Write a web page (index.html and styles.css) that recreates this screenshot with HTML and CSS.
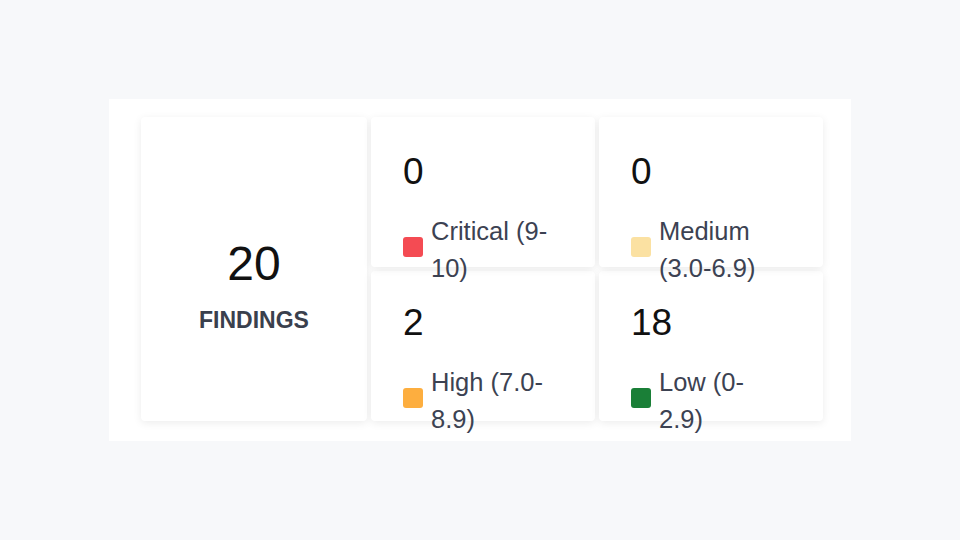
FILE: index.html
```html
<html>
<head>
<meta name="viewport" content="width=device-width, initial-scale=1.0">
<link rel="stylesheet" href="styles.css">
</head>
<body>
  <div class="summary_panel">
    <div class="summary_grid">
      <div class="total_card">
        <div class="total_count">20</div>
        <div class="total_label">FINDINGS</div>
      </div>

      <div class="sev_card top_row">
        <div class="sev_count">0</div>
        <div class="sev_legend">
          <span class="sev_dot critical"></span>
          <span class="sev_name">Critical (9-10)</span>
        </div>
      </div>

      <div class="sev_card top_row">
        <div class="sev_count">0</div>
        <div class="sev_legend">
          <span class="sev_dot medium"></span>
          <span class="sev_name">Medium (3.0-6.9)</span>
        </div>
      </div>

      <div class="sev_card">
        <div class="sev_count">2</div>
        <div class="sev_legend">
          <span class="sev_dot high"></span>
          <span class="sev_name">High (7.0-8.9)</span>
        </div>
      </div>

      <div class="sev_card">
        <div class="sev_count">18</div>
        <div class="sev_legend">
          <span class="sev_dot low"></span>
          <span class="sev_name">Low (0-2.9)</span>
        </div>
      </div>
    </div>
  </div>
</body>
</html>
```

FILE: styles.css
```css
body {
    margin: 0;
    height: 540px;
    display: flex;
    align-items: center;
    justify-content: center;
    background: #f7f8fa;
    font-family: "Liberation Sans", Arial, Helvetica, sans-serif;
}

.summary_panel {
    width: 742px;
    box-sizing: border-box;
    padding: 18px 28px 20px 32px;
    background: #fff;
}

.summary_grid {
    display: grid;
    grid-template-columns: 226px 224px 224px;
    grid-template-rows: 150px 150px;
    gap: 4px;
}

.total_card,
.sev_card {
    background: #fff;
    border-radius: 4px;
    box-shadow: 0 2px 8px rgba(0, 0, 0, 0.08);
}

.total_card {
    grid-row: 1 / span 2;
    display: flex;
    flex-direction: column;
    align-items: center;
    justify-content: center;
    padding-top: 31px;
    box-sizing: border-box;
}

.total_count {
    font-size: 48px;
    line-height: 53px;
    color: #111;
}

.total_label {
    margin-top: 18px;
    font-size: 23px;
    line-height: 25px;
    font-weight: bold;
    color: #3a404d;
}

.sev_card {
    padding: 32px 42px 0 32px;
    box-sizing: border-box;
}

/* labels of the top row spill over the row below */
.sev_card.top_row {
    z-index: 1;
    padding-top: 35px;
}

.sev_count {
    font-size: 37px;
    line-height: 40px;
    color: #111;
}

.sev_legend {
    display: flex;
    align-items: center;
    margin-top: 21px;
}

.sev_dot {
    flex: none;
    width: 20px;
    height: 20px;
    border-radius: 3px;
    margin-right: 8px;
    margin-bottom: 7px;
}

.sev_dot.critical { background: #f44b53; }
.sev_dot.medium { background: #fbe1a2; }
.sev_dot.high { background: #fdae3f; }
.sev_dot.low { background: #1a7f37; }

.sev_name {
    font-size: 25.5px;
    line-height: 37px;
    color: #3c4252;
}
```
